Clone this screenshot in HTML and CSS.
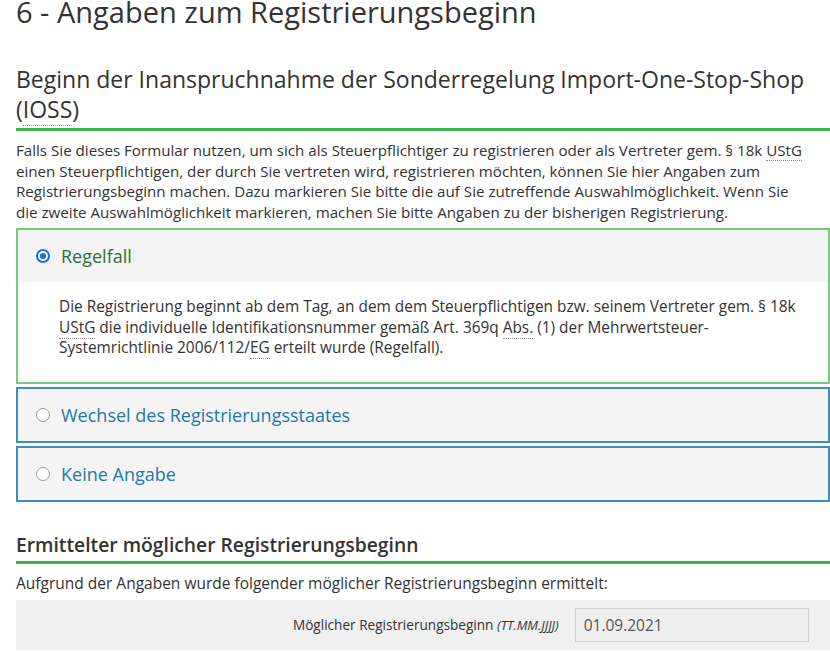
FILE: index.html
```html
<!DOCTYPE html>
<html lang="de">
<head>
<meta charset="utf-8">
<title>Angaben zum Registrierungsbeginn</title>
<link rel="stylesheet" href="styles.css">
</head>
<body>
<main class="page">
  <h1 class="page-title">6 - Angaben zum Registrierungsbeginn</h1>

  <section class="section">
    <h2 class="section-title">Beginn der Inanspruchnahme der Sonderregelung Import-One-Stop-Shop (<abbr title="Import-One-Stop-Shop">IOSS</abbr>)</h2>
    <p class="intro">Falls Sie dieses Formular nutzen, um sich als Steuerpflichtiger zu registrieren oder als Vertreter gem. § 18k <abbr title="Umsatzsteuergesetz">UStG</abbr> einen Steuerpflichtigen, der durch Sie vertreten wird, registrieren möchten, können Sie hier Angaben zum Registrierungsbeginn machen. Dazu markieren Sie bitte die auf Sie zutreffende Auswahlmöglichkeit. Wenn Sie<br>die zweite Auswahlmöglichkeit markieren, machen Sie bitte Angaben zu der bisherigen Registrierung.</p>

    <div class="options">
      <div class="option option-selected">
        <label class="option-head">
          <input class="radio" type="radio" name="beginn" checked>
          <span class="option-label">Regelfall</span>
        </label>
        <div class="option-body">
          Die Registrierung beginnt ab dem Tag, an dem dem Steuerpflichtigen bzw. seinem Vertreter gem. § 18k <abbr title="Umsatzsteuergesetz">UStG</abbr> die individuelle Identifikationsnummer gemäß Art. 369q <abbr title="Absatz">Abs.</abbr> (1) der Mehrwertsteuer-Systemrichtlinie 2006/112/<abbr title="Europäische Gemeinschaft">EG</abbr> erteilt wurde (Regelfall).
        </div>
      </div>
      <div class="option">
        <label class="option-head">
          <input class="radio" type="radio" name="beginn">
          <span class="option-label">Wechsel des Registrierungsstaates</span>
        </label>
      </div>
      <div class="option">
        <label class="option-head">
          <input class="radio" type="radio" name="beginn">
          <span class="option-label">Keine Angabe</span>
        </label>
      </div>
    </div>
  </section>

  <section class="result">
    <h3 class="result-title">Ermittelter möglicher Registrierungsbeginn</h3>
    <p class="result-text">Aufgrund der Angaben wurde folgender möglicher Registrierungsbeginn ermittelt:</p>
    <div class="form-row">
      <label class="form-label" for="beginn-datum">Möglicher Registrierungsbeginn <em class="hint">(TT.MM.JJJJ)</em></label>
      <div class="form-field">
        <input class="form-input" id="beginn-datum" type="text" value="01.09.2021" readonly>
      </div>
    </div>
  </section>
</main>
</body>
</html>
```

FILE: styles.css
```css
* { box-sizing: border-box; }

html, body {
  margin: 0;
  padding: 0;
  background: #fff;
}

body {
  font-family: "Open Sans", "Noto Sans", sans-serif;
  color: #333;
  overflow: hidden;
}

.page {
  padding: 0 0 0 16px;
}

.page-title {
  font-size: 29px;
  line-height: 24px;
  font-weight: 400;
  margin: 0 0 40px;
  color: #333;
}

.section-title {
  font-size: 23px;
  line-height: 30px;
  font-weight: 400;
  margin: 0;
  padding-bottom: 4px;
  border-bottom: 3px solid #3db44b;
  color: #333;
}

abbr {
  text-decoration: none;
  border-bottom: 1px dotted #8a8a8a;
}

.intro {
  font-size: 15.15px;
  line-height: 20.5px;
  margin: 9px 0 6px;
}

.options {
  display: flex;
  flex-direction: column;
  gap: 3px;
}

.option {
  border: 2px solid #3f8dbd;
  background: #f5f5f5;
}

.option-selected {
  border-color: #76cb80;
  background: #fff;
}

.option-head {
  display: flex;
  align-items: center;
  gap: 11px;
  height: 52px;
  padding: 0 0 0 18px;
  background: #f5f5f5;
  cursor: pointer;
}

.radio {
  appearance: none;
  -webkit-appearance: none;
  margin: 0;
  width: 14px;
  height: 14px;
  border: 1px solid #9a9a9a;
  border-radius: 50%;
  background: #fff;
  flex: none;
}

.radio:checked {
  border: 2px solid #1673f2;
  background: radial-gradient(circle, #1673f2 0 2.8px, #fff 3.4px);
}

.option-label {
  font-size: 18px;
  line-height: 26px;
  color: #1f78a6;
}

.option-selected .option-label {
  color: #2e6d38;
}

.option-body {
  font-size: 15.4px;
  line-height: 20.5px;
  padding: 15px 22px 23px 41px;
}

.result {
  margin-top: 30px;
}

.result-title {
  font-size: 19.3px;
  line-height: 26px;
  font-weight: 600;
  margin: 0;
  padding-bottom: 3px;
  border-bottom: 3px solid #3db44b;
  color: #333;
}

.result-text {
  font-size: 15.5px;
  line-height: 22px;
  margin: 8px 0 6px;
}

.form-row {
  display: grid;
  grid-template-columns: 2fr 1fr;
  align-items: center;
  background: #f0f0f0;
  padding: 8px 0;
}

.form-label {
  text-align: right;
  font-size: 13.6px;
  color: #333;
}

.hint {
  font-size: 12.8px;
}

.form-field {
  padding-left: 16px;
}

.form-input {
  display: block;
  width: 234px;
  height: 34px;
  padding: 0 8px;
  font-family: inherit;
  font-size: 15.5px;
  color: #555;
  background: #efefef;
  border: 1px solid #cfcfcf;
  border-radius: 0;
  outline: none;
}
```
